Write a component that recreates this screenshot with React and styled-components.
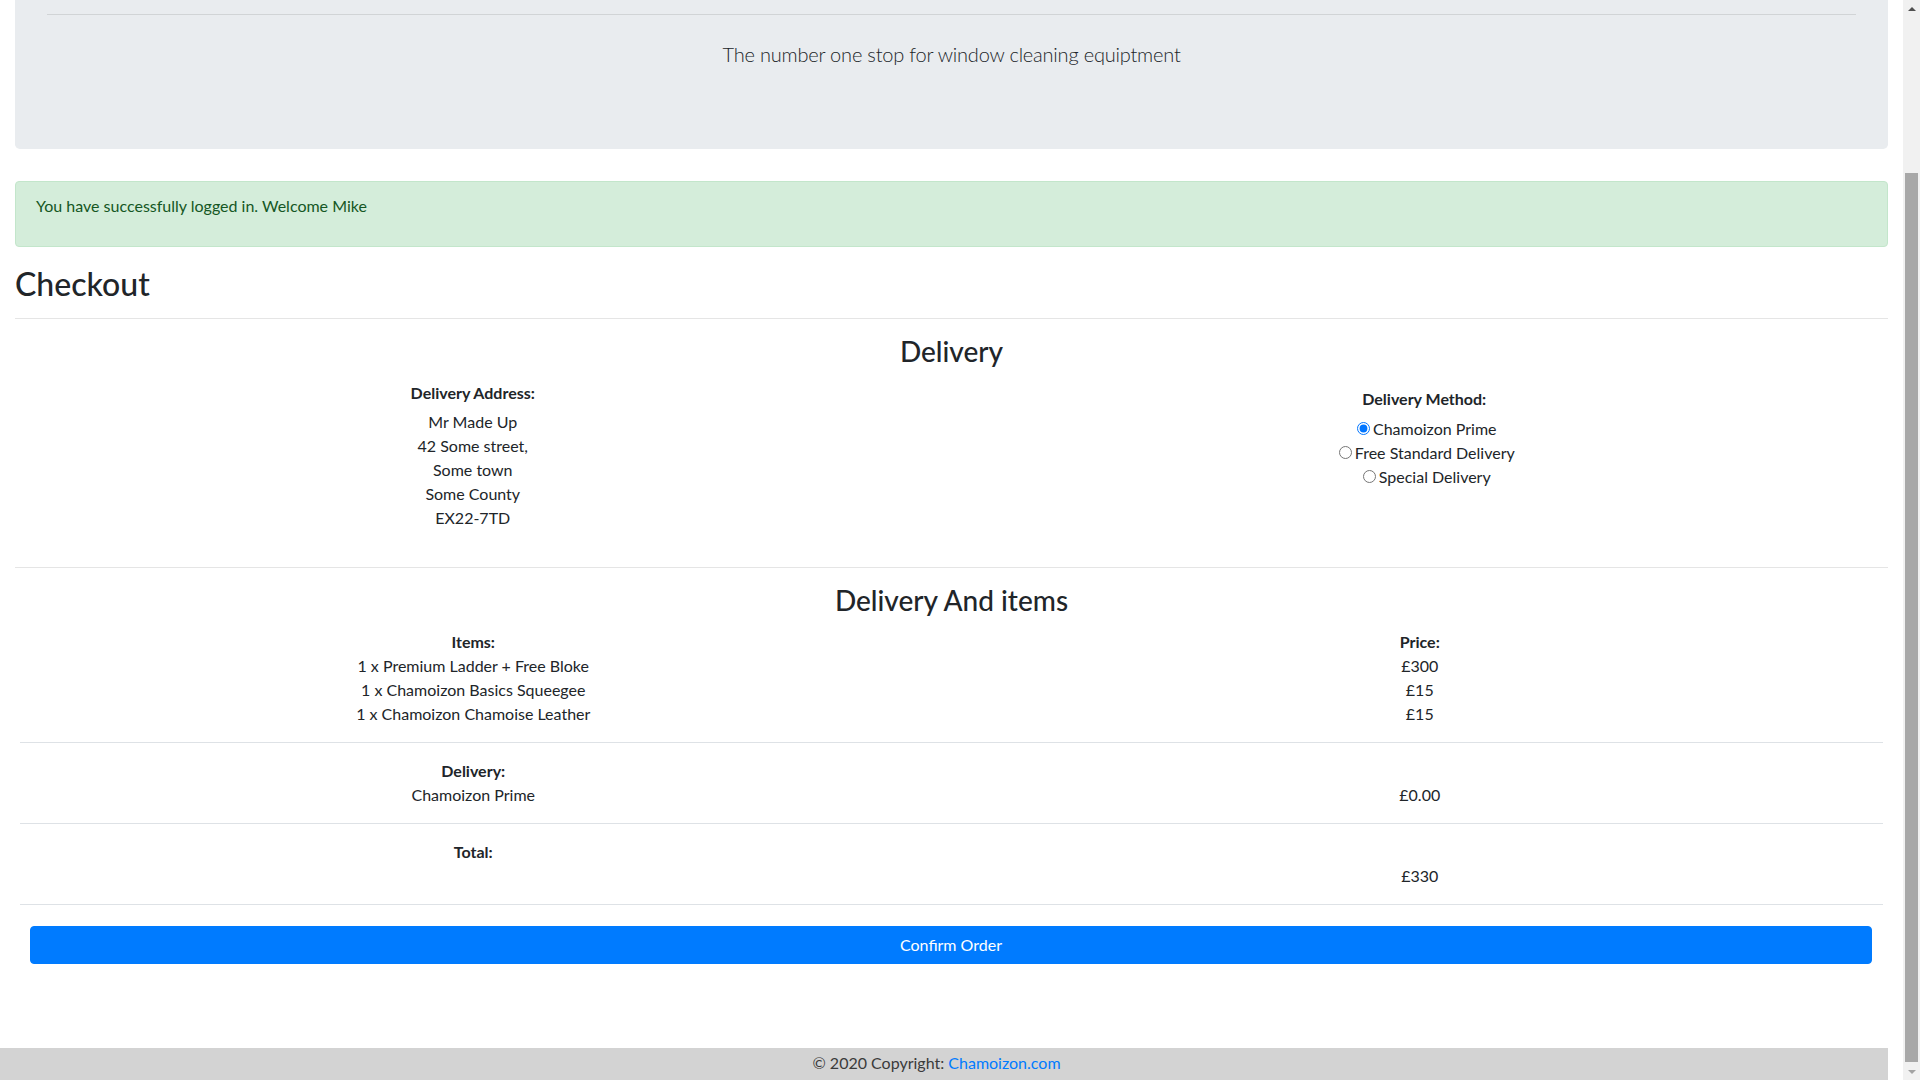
import React from "react";
import styled, { createGlobalStyle } from "styled-components";

const GlobalStyle = createGlobalStyle`
  *, *::before, *::after { box-sizing: border-box; }
  html, body { margin: 0; height: 100%; overflow: hidden; }
  body {
    font-family: Lato, "Liberation Sans", sans-serif;
    font-size: 16px;
    line-height: 1.5;
    color: #212529;
    background: #fff;
  }
`;

// window = page + the scrollbar on the right
const Window = styled.div`
  display: flex;
  height: 100vh;
`;

const Page = styled.div`
  flex: 1;
  min-width: 0;
  display: flex;
  flex-direction: column;
`;

const Container = styled.main`
  padding: 0 15px;
`;

const Jumbotron = styled.header`
  background: #e9ecef;
  padding: 14px 32px 64px;
  border-radius: 0 0 4.8px 4.8px;
  margin-bottom: 32px;
`;

const Rule = styled.hr`
  height: 0;
  border: 0;
  border-top: 1px solid rgba(0, 0, 0, 0.1);
  margin: ${(p) => p.$margin || "16px 0"};
`;

const Lead = styled.p`
  margin: 0 0 16px;
  font-size: 20px;
  font-weight: 300;
  letter-spacing: -0.2px;
  text-align: center;
`;

const Alert = styled.div`
  background: #d4edda;
  border: 1px solid #c3e6cb;
  border-radius: 4px;
  color: #155724;
  padding: 12px 20px;
  margin-bottom: 16px;

  p {
    margin: 0 0 16px;
  }
`;

const PageTitle = styled.h2`
  margin: 0 0 8px;
  padding-top: 2px;
  font-size: 32px;
  font-weight: 500;
  line-height: 1.2;
`;

const SectionTitle = styled.h3`
  margin: 0 0 8px;
  font-size: 28px;
  font-weight: 500;
  line-height: 1.2;
  text-align: center;
`;

const TwoCols = styled.div`
  display: grid;
  grid-template-columns: 1fr 1fr;
  margin: 0 -12px 0 -18px;
`;

const Col = styled.div`
  padding: ${(p) => p.$pad || "4px 15px 21px"};
  text-align: center;
`;

const Label = styled.div`
  font-weight: 700;
  margin-bottom: ${(p) => p.$mb || "5px"};
`;

const Line = styled.div``;

const Radio = styled.label`
  display: block;

  input {
    margin: 3px 3px 0 5px;
    accent-color: #0075ff;
  }
`;

const Table = styled.div`
  margin: 0 5px;
`;

const TableRow = styled.div`
  padding: ${(p) => (p.$first ? "4px" : "16px")} 0 16px;
  border-bottom: 1px solid #dee2e6;
`;

const Cells = styled.div`
  display: grid;
  grid-template-columns: 1fr 1fr;
  margin: 0 -10px 0 -20px;
  text-align: center;
`;

const ConfirmButton = styled.button`
  display: block;
  width: calc(100% - 31px);
  margin: 21px 16px 0 15px;
  padding: 6px 12px;
  border: 1px solid #007bff;
  border-radius: 4px;
  background: #007bff;
  color: #fff;
  font: inherit;
  line-height: 1.5;
  cursor: pointer;
`;

const Footer = styled.footer`
  margin-top: auto;
  margin-right: 15px;
  height: 32px;
  padding: 3px 15px 0 0;
  background: #d3d3d3;
  color: #3b3b3b;
  text-align: center;

  a {
    color: #007bff;
    text-decoration: none;
  }
`;

const Scrollbar = styled.div`
  width: 17px;
  flex: none;
  background: #f1f1f1;
  display: flex;
  flex-direction: column;
`;

const Arrow = styled.div`
  height: 17px;
  display: flex;
  align-items: center;
  justify-content: center;

  &::before {
    content: "";
    border-left: 4px solid transparent;
    border-right: 4px solid transparent;
    ${(p) =>
      p.$down
        ? "border-top: 4px solid #a3a3a3;"
        : "border-bottom: 4px solid #505050;"}
  }
`;

const Track = styled.div`
  flex: 1;
`;

const Thumb = styled.div`
  margin: 156px 2px 0;
  height: 889px;
  background: #a8a8a8;
`;

const address = ["Mr Made Up", "42 Some street,", "Some town", "Some County", "EX22-7TD"];
const methods = ["Chamoizon Prime", "Free Standard Delivery", "Special Delivery"];
const items = [
  { name: "1 x Premium Ladder + Free Bloke", price: "£300" },
  { name: "1 x Chamoizon Basics Squeegee", price: "£15" },
  { name: "1 x Chamoizon Chamoise Leather", price: "£15" },
];

const App = () => {
  return (
    <>
      <GlobalStyle />
      <Window>
        <Page>
          <Container>
            <Jumbotron>
              <Rule $margin="0 0 24px" />
              <Lead>The number one stop for window cleaning equiptment</Lead>
            </Jumbotron>

            <Alert>
              <p>You have successfully logged in. Welcome Mike</p>
            </Alert>

            <PageTitle>Checkout</PageTitle>
            <Rule $margin="15px 0 16px" />

            <SectionTitle>Delivery</SectionTitle>
            <TwoCols>
              <Col>
                <Label>Delivery Address:</Label>
                {address.map((l) => (
                  <Line key={l}>{l}</Line>
                ))}
              </Col>
              <Col $pad="10px 15px 0">
                <Label $mb="6px">Delivery Method:</Label>
                {methods.map((m, i) => (
                  <Radio key={m}>
                    <input type="radio" name="delivery" defaultChecked={i === 0} />
                    {m}
                  </Radio>
                ))}
              </Col>
            </TwoCols>
            <Rule />

            <SectionTitle>Delivery And items</SectionTitle>
            <Table>
              <TableRow $first>
                <Cells>
                  <div>
                    <Label $mb="0">Items:</Label>
                    {items.map((it) => (
                      <Line key={it.name}>{it.name}</Line>
                    ))}
                  </div>
                  <div>
                    <Label $mb="0">Price:</Label>
                    {items.map((it) => (
                      <Line key={it.name}>{it.price}</Line>
                    ))}
                  </div>
                </Cells>
              </TableRow>
              <TableRow>
                <Cells>
                  <div>
                    <Label $mb="0">Delivery:</Label>
                    <Line>Chamoizon Prime</Line>
                  </div>
                  <div>
                    <Line>&nbsp;</Line>
                    <Line>£0.00</Line>
                  </div>
                </Cells>
              </TableRow>
              <TableRow>
                <Cells>
                  <div>
                    <Label $mb="0">Total:</Label>
                    <Line>&nbsp;</Line>
                  </div>
                  <div>
                    <Line>&nbsp;</Line>
                    <Line>£330</Line>
                  </div>
                </Cells>
              </TableRow>
            </Table>

            <ConfirmButton type="button">Confirm Order</ConfirmButton>
          </Container>

          <Footer>
            © 2020 Copyright: <a href="#">Chamoizon.com</a>
          </Footer>
        </Page>

        <Scrollbar>
          <Arrow />
          <Track>
            <Thumb />
          </Track>
          <Arrow $down />
        </Scrollbar>
      </Window>
    </>
  );
};

export default App;
